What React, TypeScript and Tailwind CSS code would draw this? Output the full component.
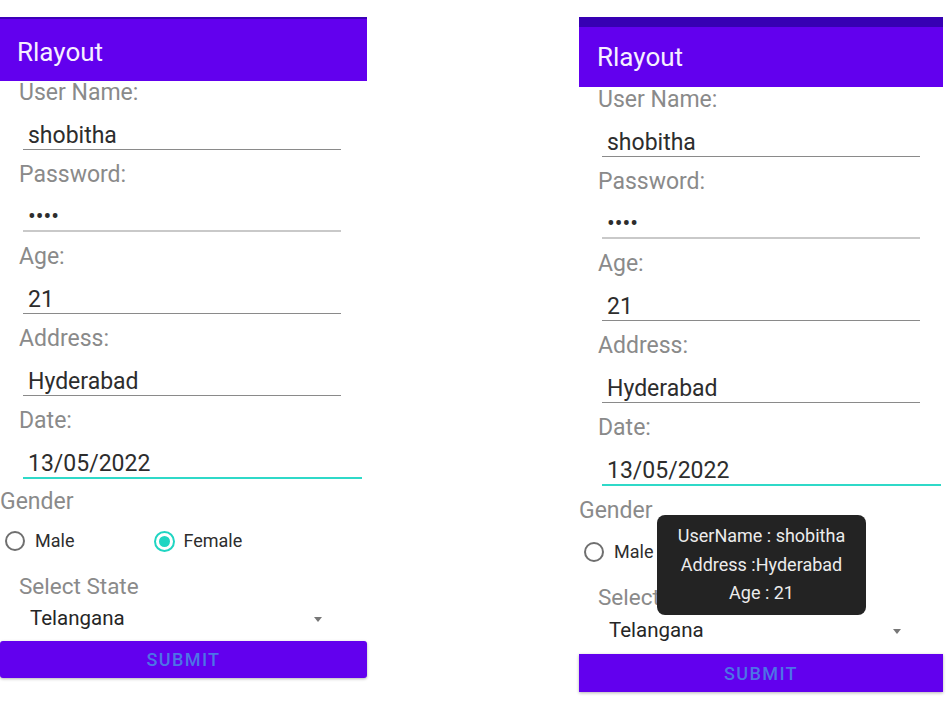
import React from "react";

interface Field {
  label: string;
  value: string;
  focused?: boolean;
  light?: boolean;
}

const fields: Field[] = [
  { label: "User Name:", value: "shobitha" },
  { label: "Password:", value: "••••", light: true },
  { label: "Age:", value: "21" },
  { label: "Address:", value: "Hyderabad" },
  { label: "Date:", value: "13/05/2022", focused: true },
];

function Radio({ checked }: { checked?: boolean }) {
  if (checked) {
    return (
      <span className="flex h-[21px] w-[21px] items-center justify-center rounded-full border-2 border-[#1fd5c2]">
        <span className="h-[11px] w-[11px] rounded-full bg-[#1fd5c2]" />
      </span>
    );
  }
  return <span className="h-[20px] w-[20px] rounded-full border-2 border-[#6f6f6f]" />;
}

function Phone({ right }: { right?: boolean }) {
  return (
    <div className={right ? "relative w-[364px]" : "relative w-[367px]"}>
      {/* app bar */}
      {right ? (
        <>
          <div className="h-[10px] bg-[#3700b3]" />
          <div className="h-[60px] bg-[#6200ee] pl-[18px] pt-[15px] text-[26px] leading-[30px] text-[#f6efff]">
            Rlayout
          </div>
        </>
      ) : (
        <div className="h-[64px] border-t-2 border-[#3d00b8] bg-[#6200ee] pl-[17px] pt-[18px] text-[26px] leading-[30px] text-[#f6efff]">
          Rlayout
        </div>
      )}

      {/* edit fields */}
      <div className={right ? "pt-[1px]" : ""}>
        {fields.map((f) => (
          <div key={f.label} className="mb-[13px]">
            <div className="pl-[19px] text-[23px] leading-[23px] text-[#8a8a8a]">{f.label}</div>
            <div
              className={
                f.focused
                  ? "ml-[23px] w-[339px] border-b-2 border-[#2fd9c8] pl-[5px] pt-[18px] text-[23px] leading-[27px] text-[#2d2d2d]"
                  : f.light
                    ? "ml-[23px] w-[318px] border-b-2 border-[#c9c9c9] pl-[5px] pt-[17px] text-[23px] leading-[27px] text-[#2d2d2d]"
                    : "ml-[23px] w-[318px] border-b border-[#8a8a8a] pl-[5px] pt-[18px] text-[23px] leading-[27px] text-[#2d2d2d]"
              }
            >
              {f.value}
            </div>
          </div>
        ))}
      </div>

      {/* gender */}
      <div className={right ? "mt-[2px] text-[23px] leading-[23px] text-[#8a8a8a]" : "-mt-[2px] text-[23px] leading-[23px] text-[#8a8a8a]"}>
        Gender
      </div>
      <div
        className={
          right
            ? "mt-[10px] flex h-[40px] items-center text-[18px] leading-[18px] text-[#2d2d2d]"
            : "mt-[8px] flex h-[40px] items-center text-[18px] leading-[18px] text-[#2d2d2d]"
        }
      >
        <div className="flex items-center pl-[5px]">
          <Radio />
          <span className="ml-[10px]">Male</span>
        </div>
        <div className="ml-[80px] flex items-center">
          <Radio checked />
          <span className="ml-[8px]">Female</span>
        </div>
      </div>

      {/* spinner */}
      <div className="mt-[14px] pl-[19px] text-[22.5px] leading-[23px] text-[#8a8a8a]">Select State</div>
      <div
        className={
          right
            ? "mt-[9px] flex items-center justify-between pl-[30px] pr-[42px] text-[20.5px] leading-[24px] text-[#262626]"
            : "mt-[8px] flex items-center justify-between pl-[30px] pr-[45px] text-[20.5px] leading-[24px] text-[#262626]"
        }
      >
        <span>Telangana</span>
        <span className="mt-[2px] h-0 w-0 border-x-[4px] border-t-[5px] border-x-transparent border-t-[#777777]" />
      </div>

      <button
        className={
          right
            ? "mt-[12px] h-[38px] w-full bg-[#6200ee] text-[18px] font-medium tracking-[1.4px] text-[#4d74e6] shadow-[0_1px_3px_rgba(0,0,0,0.3)]"
            : "mt-[11px] h-[37px] w-full rounded-[3px] bg-[#6200ee] text-[18px] font-medium tracking-[1.4px] text-[#4d74e6] shadow-[0_1px_3px_rgba(0,0,0,0.3)]"
        }
      >
        SUBMIT
      </button>

      {right && (
        <div className="absolute left-[78px] top-[498px] flex h-[100px] w-[209px] flex-col items-center justify-center rounded-[8px] bg-[#232323] text-[18px] leading-[28.5px] text-[#ececec]">
          <span>UserName : shobitha</span>
          <span>Address :Hyderabad</span>
          <span>Age : 21</span>
        </div>
      )}
    </div>
  );
}

export default function App() {
  return (
    <div className="flex h-[709px] w-[952px] gap-[212px] bg-white pt-[17px] font-['Roboto',sans-serif]">
      <Phone />
      <Phone right />
    </div>
  );
}
